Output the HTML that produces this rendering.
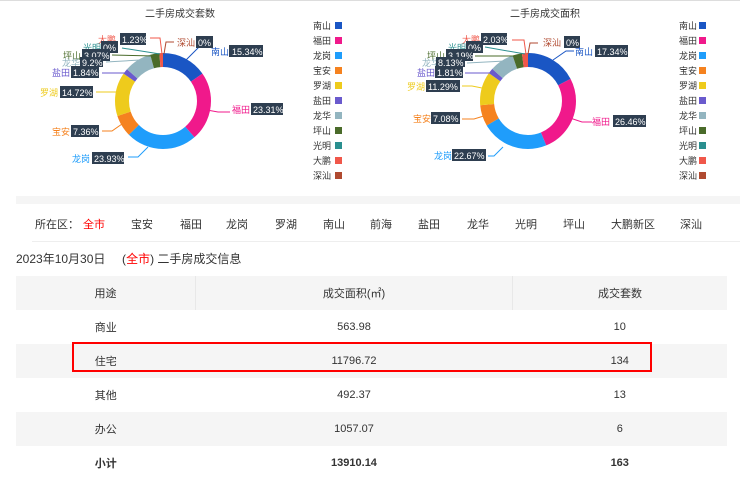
<!DOCTYPE html>
<html><head><meta charset="utf-8"><style>
body{margin:0;width:740px;height:470px;overflow:hidden;background:#fff;font-family:"Liberation Sans","Noto Sans CJK SC",sans-serif;position:relative}
.abs{position:absolute}
.f{position:absolute;top:216px;font-size:11px;color:#333}
table{position:absolute;left:16px;top:276px;width:711px;border-collapse:collapse;font-size:11px;color:#333}
td{text-align:center;height:34px;padding:0}
tr.g td{background:#f5f5f5}
</style></head><body>
<div class="abs" style="left:0;top:0;width:740px;height:1px;background:#ddd"></div>
<svg class="abs" style="left:0;top:0" width="740" height="195" font-family="Liberation Sans, Noto Sans CJK SC, sans-serif">
<text x="180" y="17" font-size="10" text-anchor="middle" fill="#333">二手房成交套数</text>
<text x="545" y="17" font-size="10" text-anchor="middle" fill="#333">二手房成交面积</text>
<g transform="rotate(-90 163 101)" fill="none" stroke-width="14">
<circle cx="163" cy="101" r="41" pathLength="100" stroke="#1a56c4" stroke-dasharray="15.34 100" stroke-dashoffset="0"/>
<circle cx="163" cy="101" r="41" pathLength="100" stroke="#f0198b" stroke-dasharray="23.31 100" stroke-dashoffset="-15.34"/>
<circle cx="163" cy="101" r="41" pathLength="100" stroke="#1f9dfb" stroke-dasharray="23.93 100" stroke-dashoffset="-38.65"/>
<circle cx="163" cy="101" r="41" pathLength="100" stroke="#f5821f" stroke-dasharray="7.36 100" stroke-dashoffset="-62.58"/>
<circle cx="163" cy="101" r="41" pathLength="100" stroke="#eecb1c" stroke-dasharray="14.72 100" stroke-dashoffset="-69.94"/>
<circle cx="163" cy="101" r="41" pathLength="100" stroke="#6a5acd" stroke-dasharray="1.84 100" stroke-dashoffset="-84.66"/>
<circle cx="163" cy="101" r="41" pathLength="100" stroke="#93b5c0" stroke-dasharray="9.2 100" stroke-dashoffset="-86.5"/>
<circle cx="163" cy="101" r="41" pathLength="100" stroke="#4a6b2a" stroke-dasharray="3.07 100" stroke-dashoffset="-95.7"/>
<circle cx="163" cy="101" r="41" pathLength="100" stroke="#f0574a" stroke-dasharray="1.23 100" stroke-dashoffset="-98.77"/>
</g>
<g transform="rotate(-90 528 101)" fill="none" stroke-width="14">
<circle cx="528" cy="101" r="41" pathLength="100" stroke="#1a56c4" stroke-dasharray="17.34 100" stroke-dashoffset="0"/>
<circle cx="528" cy="101" r="41" pathLength="100" stroke="#f0198b" stroke-dasharray="26.46 100" stroke-dashoffset="-17.34"/>
<circle cx="528" cy="101" r="41" pathLength="100" stroke="#1f9dfb" stroke-dasharray="22.67 100" stroke-dashoffset="-43.8"/>
<circle cx="528" cy="101" r="41" pathLength="100" stroke="#f5821f" stroke-dasharray="7.08 100" stroke-dashoffset="-66.47"/>
<circle cx="528" cy="101" r="41" pathLength="100" stroke="#eecb1c" stroke-dasharray="11.29 100" stroke-dashoffset="-73.55"/>
<circle cx="528" cy="101" r="41" pathLength="100" stroke="#6a5acd" stroke-dasharray="1.81 100" stroke-dashoffset="-84.84"/>
<circle cx="528" cy="101" r="41" pathLength="100" stroke="#93b5c0" stroke-dasharray="8.13 100" stroke-dashoffset="-86.65"/>
<circle cx="528" cy="101" r="41" pathLength="100" stroke="#4a6b2a" stroke-dasharray="3.19 100" stroke-dashoffset="-94.78"/>
<circle cx="528" cy="101" r="41" pathLength="100" stroke="#f0574a" stroke-dasharray="2.03 100" stroke-dashoffset="-97.97"/>
</g>
<g font-size="9">
<!-- left leader lines -->
<g fill="none" stroke-width="1">
<path d="M186 60 L200 46 L210 46" stroke="#1a56c4"/>
<path d="M207 110 L218 112 L230 112" stroke="#f0198b"/>
<path d="M148 147 L138 157 L128 157" stroke="#1f9dfb"/>
<path d="M122 124 L112 131 L102 131" stroke="#f5821f"/>
<path d="M117 92 L96 92" stroke="#eecb1c"/>
<path d="M125 73 L102 73" stroke="#6a5acd"/>
<path d="M140 60 L106 62" stroke="#93b5c0"/>
<path d="M155 56 L112 55" stroke="#4a6b2a"/>
<path d="M160 54 L122 48" stroke="#2a8f8f"/>
<path d="M162 54 L160 38 L150 38" stroke="#f0574a"/>
<path d="M164 54 L166 42 L174 42" stroke="#b04a30"/>
</g>
<g fill="none" stroke-width="1">
<path d="M553 60 L566 51 L574 51" stroke="#1a56c4"/>
<path d="M570 118 L582 122 L592 122" stroke="#f0198b"/>
<path d="M503 147 L494 156 L488 156" stroke="#1f9dfb"/>
<path d="M487 115 L474 119 L462 119" stroke="#f5821f"/>
<path d="M482 88 L472 86 L462 86" stroke="#eecb1c"/>
<path d="M490 73 L465 73" stroke="#6a5acd"/>
<path d="M505 61 L467 63" stroke="#93b5c0"/>
<path d="M521 56 L475 56" stroke="#4a6b2a"/>
<path d="M525 54 L485 47" stroke="#2a8f8f"/>
<path d="M526 54 L524 40 L512 40" stroke="#f0574a"/>
<path d="M528 54 L530 43 L538 43" stroke="#b04a30"/>
</g>
<!-- left labels -->
<text x="98" y="43" fill="#f0574a">大鹏</text><rect x="120" y="33" width="26" height="12" fill="#2e3e50"/><text x="122" y="43" fill="#fff">1.23%</text>
<text x="177" y="46" fill="#b04a30">深汕</text><rect x="196" y="36" width="17" height="12" fill="#2e3e50"/><text x="198" y="46" fill="#fff">0%</text>
<text x="211" y="55" fill="#1a56c4">南山</text><rect x="229" y="45" width="34" height="12" fill="#2e3e50"/><text x="232" y="55" fill="#fff">15.34%</text>
<text x="83" y="51" fill="#2a8f8f">光明</text><rect x="101" y="41" width="17" height="12" fill="#2e3e50"/><text x="103" y="51" fill="#fff">0%</text>
<text x="63" y="59" fill="#4a6b2a">坪山</text><rect x="82" y="49" width="28" height="12" fill="#2e3e50"/><text x="84" y="59" fill="#fff">3.07%</text>
<text x="62" y="66" fill="#93b5c0">龙华</text><rect x="80" y="57" width="23" height="10" fill="#2e3e50"/><text x="82" y="66" fill="#fff">9.2%</text>
<text x="52" y="76" fill="#6a5acd">盐田</text><rect x="71" y="66" width="28" height="12" fill="#2e3e50"/><text x="73" y="76" fill="#fff">1.84%</text>
<text x="40" y="96" fill="#eecb1c">罗湖</text><rect x="60" y="86" width="33" height="12" fill="#2e3e50"/><text x="62" y="96" fill="#fff">14.72%</text>
<text x="52" y="135" fill="#f5821f">宝安</text><rect x="71" y="125" width="28" height="12" fill="#2e3e50"/><text x="73" y="135" fill="#fff">7.36%</text>
<text x="72" y="162" fill="#1f9dfb">龙岗</text><rect x="92" y="152" width="32" height="12" fill="#2e3e50"/><text x="94" y="162" fill="#fff">23.93%</text>
<text x="232" y="113" fill="#f0198b">福田</text><rect x="251" y="103" width="32" height="12" fill="#2e3e50"/><text x="253" y="113" fill="#fff">23.31%</text>
<!-- right labels -->
<text x="462" y="43" fill="#f0574a">大鹏</text><rect x="481" y="33" width="26" height="12" fill="#2e3e50"/><text x="483" y="43" fill="#fff">2.03%</text>
<text x="543" y="46" fill="#b04a30">深汕</text><rect x="564" y="36" width="16" height="12" fill="#2e3e50"/><text x="566" y="46" fill="#fff">0%</text>
<text x="575" y="55" fill="#1a56c4">南山</text><rect x="595" y="45" width="33" height="12" fill="#2e3e50"/><text x="597" y="55" fill="#fff">17.34%</text>
<text x="448" y="51" fill="#2a8f8f">光明</text><rect x="466" y="41" width="17" height="12" fill="#2e3e50"/><text x="468" y="51" fill="#fff">0%</text>
<text x="427" y="59" fill="#4a6b2a">坪山</text><rect x="446" y="49" width="27" height="12" fill="#2e3e50"/><text x="448" y="59" fill="#fff">3.19%</text>
<text x="422" y="66" fill="#93b5c0">龙华</text><rect x="436" y="57" width="29" height="10" fill="#2e3e50"/><text x="438" y="66" fill="#fff">8.13%</text>
<text x="417" y="76" fill="#6a5acd">盐田</text><rect x="435" y="66" width="28" height="12" fill="#2e3e50"/><text x="437" y="76" fill="#fff">1.81%</text>
<text x="407" y="90" fill="#eecb1c">罗湖</text><rect x="426" y="80" width="34" height="12" fill="#2e3e50"/><text x="428" y="90" fill="#fff">11.29%</text>
<text x="413" y="122" fill="#f5821f">宝安</text><rect x="431" y="112" width="29" height="12" fill="#2e3e50"/><text x="433" y="122" fill="#fff">7.08%</text>
<text x="434" y="159" fill="#1f9dfb">龙岗</text><rect x="452" y="149" width="34" height="12" fill="#2e3e50"/><text x="454" y="159" fill="#fff">22.67%</text>
<text x="592" y="125" fill="#f0198b">福田</text><rect x="613" y="115" width="33" height="12" fill="#2e3e50"/><text x="615" y="125" fill="#fff">26.46%</text>
</g>
<!-- legends -->
<g font-size="9" fill="#333">
<text x="313" y="29">南山</text><rect x="335" y="22" width="7" height="7" fill="#1a56c4"/>
<text x="313" y="44">福田</text><rect x="335" y="37" width="7" height="7" fill="#f0198b"/>
<text x="313" y="59">龙岗</text><rect x="335" y="52" width="7" height="7" fill="#1f9dfb"/>
<text x="313" y="74">宝安</text><rect x="335" y="67" width="7" height="7" fill="#f5821f"/>
<text x="313" y="89">罗湖</text><rect x="335" y="82" width="7" height="7" fill="#eecb1c"/>
<text x="313" y="104">盐田</text><rect x="335" y="97" width="7" height="7" fill="#6a5acd"/>
<text x="313" y="119">龙华</text><rect x="335" y="112" width="7" height="7" fill="#93b5c0"/>
<text x="313" y="134">坪山</text><rect x="335" y="127" width="7" height="7" fill="#4a6b2a"/>
<text x="313" y="149">光明</text><rect x="335" y="142" width="7" height="7" fill="#2a8f8f"/>
<text x="313" y="164">大鹏</text><rect x="335" y="157" width="7" height="7" fill="#f0574a"/>
<text x="313" y="179">深汕</text><rect x="335" y="172" width="7" height="7" fill="#b04a30"/>
<text x="679" y="29">南山</text><rect x="699" y="22" width="7" height="7" fill="#1a56c4"/>
<text x="679" y="44">福田</text><rect x="699" y="37" width="7" height="7" fill="#f0198b"/>
<text x="679" y="59">龙岗</text><rect x="699" y="52" width="7" height="7" fill="#1f9dfb"/>
<text x="679" y="74">宝安</text><rect x="699" y="67" width="7" height="7" fill="#f5821f"/>
<text x="679" y="89">罗湖</text><rect x="699" y="82" width="7" height="7" fill="#eecb1c"/>
<text x="679" y="104">盐田</text><rect x="699" y="97" width="7" height="7" fill="#6a5acd"/>
<text x="679" y="119">龙华</text><rect x="699" y="112" width="7" height="7" fill="#93b5c0"/>
<text x="679" y="134">坪山</text><rect x="699" y="127" width="7" height="7" fill="#4a6b2a"/>
<text x="679" y="149">光明</text><rect x="699" y="142" width="7" height="7" fill="#2a8f8f"/>
<text x="679" y="164">大鹏</text><rect x="699" y="157" width="7" height="7" fill="#f0574a"/>
<text x="679" y="179">深汕</text><rect x="699" y="172" width="7" height="7" fill="#b04a30"/>
</g>
</svg>
<div class="abs" style="left:16px;top:196px;width:724px;height:8px;background:#f5f5f5"></div>
<div class="f" style="left:35px">所在区：</div>
<div class="f" style="left:83px;color:#f00">全市</div>
<div class="f" style="left:131px">宝安</div>
<div class="f" style="left:180px">福田</div>
<div class="f" style="left:226px">龙岗</div>
<div class="f" style="left:275px">罗湖</div>
<div class="f" style="left:323px">南山</div>
<div class="f" style="left:370px">前海</div>
<div class="f" style="left:418px">盐田</div>
<div class="f" style="left:467px">龙华</div>
<div class="f" style="left:515px">光明</div>
<div class="f" style="left:563px">坪山</div>
<div class="f" style="left:611px">大鹏新区</div>
<div class="f" style="left:680px">深汕</div>
<div class="abs" style="left:32px;top:241px;width:708px;height:1px;background:#eee"></div>
<div class="abs" style="left:16px;top:250px;font-size:12px;color:#333">2023年10月30日&nbsp;&nbsp;&nbsp;&nbsp;&nbsp;(<span style="color:#f00">全市</span>) 二手房成交信息</div>
<table>
<tr class="g" style="height:32px"><td style="width:179px;height:32px;border-right:1px solid #e8e8e8">用途</td><td style="width:316px;border-right:1px solid #e8e8e8">成交面积(㎡)</td><td>成交套数</td></tr>
<tr><td>商业</td><td>563.98</td><td>10</td></tr>
<tr class="g"><td>住宅</td><td>11796.72</td><td>134</td></tr>
<tr><td>其他</td><td>492.37</td><td>13</td></tr>
<tr class="g"><td>办公</td><td>1057.07</td><td>6</td></tr>
<tr style="font-weight:bold"><td>小计</td><td>13910.14</td><td>163</td></tr>
</table>
<div class="abs" style="left:72px;top:342px;width:576px;height:26px;border:2px solid #f00"></div>
</body></html>
